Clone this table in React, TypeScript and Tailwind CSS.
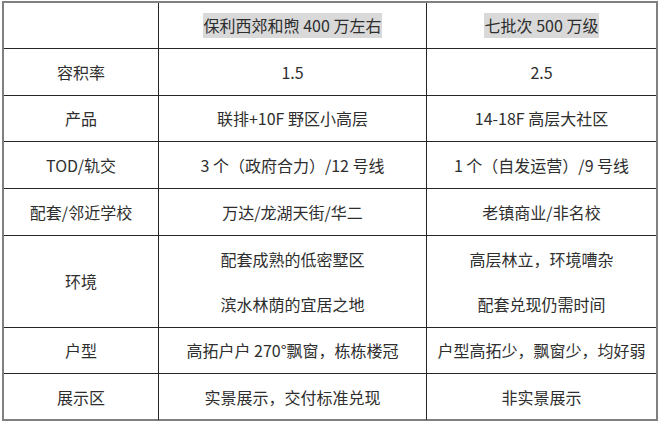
const ROWS: { label: string; a: string[]; b: string[]; h: string }[] = [
  { label: "容积率", a: ["1.5"], b: ["2.5"], h: "h-[47px]" },
  { label: "产品", a: ["联排+10F 野区小高层"], b: ["14-18F 高层大社区"], h: "h-[46px]" },
  { label: "TOD/轨交", a: ["3 个（政府合力）/12 号线"], b: ["1 个（自发运营）/9 号线"], h: "h-[47px]" },
  { label: "配套/邻近学校", a: ["万达/龙湖天街/华二"], b: ["老镇商业/非名校"], h: "h-[47px]" },
  {
    label: "环境",
    a: ["配套成熟的低密墅区", "滨水林荫的宜居之地"],
    b: ["高层林立，环境嘈杂", "配套兑现仍需时间"],
    h: "h-[92px]",
  },
  { label: "户型", a: ["高拓户户 270°飘窗，栋栋楼冠"], b: ["户型高拓少，飘窗少，均好弱"], h: "h-[46px]" },
  { label: "展示区", a: ["实景展示，交付标准兑现"], b: ["非实景展示"], h: "h-[46px]" },
];

function Cell({ lines, last, right }: { lines: string[]; last?: boolean; right?: boolean }) {
  return (
    <div
      className={
        "flex flex-col items-center justify-center gap-[22px] " +
        (last ? "" : "border-b border-[#262626] ") +
        (right ? "" : "border-r border-[#262626]")
      }
    >
      {lines.map((l) => (
        <span key={l} className="leading-[23px]">
          {l}
        </span>
      ))}
    </div>
  );
}

export default function App() {
  return (
    <div className="h-[422px] w-[660px] bg-white pl-[2px] pt-[1px]">
      <div
        className="h-[420px] w-[656px] border-2 border-[#808080] text-[16px] text-[#2e2e2e]"
        style={{ fontFamily: '"Noto Sans CJK SC", "Noto Sans", sans-serif' }}
      >
        <div className="grid grid-cols-[155px_268px_1fr]">
          <div className="h-[46px] border-b border-r border-[#262626]" />
          <div className="flex h-[46px] items-center justify-center border-b border-r border-[#262626]">
            <span className="bg-[#d9d9d9] px-[1px] leading-[25px]">保利西郊和煦 400 万左右</span>
          </div>
          <div className="flex h-[46px] items-center justify-center border-b border-[#262626]">
            <span className="bg-[#d9d9d9] px-[1px] leading-[25px]">七批次 500 万级</span>
          </div>
          {ROWS.map((r, i) => {
            const last = i === ROWS.length - 1;
            return (
              <div key={r.label} className="contents">
                <div className={r.h + " grid"}>
                  <Cell lines={[r.label]} last={last} />
                </div>
                <div className={r.h + " grid"}>
                  <Cell lines={r.a} last={last} />
                </div>
                <div className={r.h + " grid"}>
                  <Cell lines={r.b} last={last} right />
                </div>
              </div>
            );
          })}
        </div>
      </div>
    </div>
  );
}
